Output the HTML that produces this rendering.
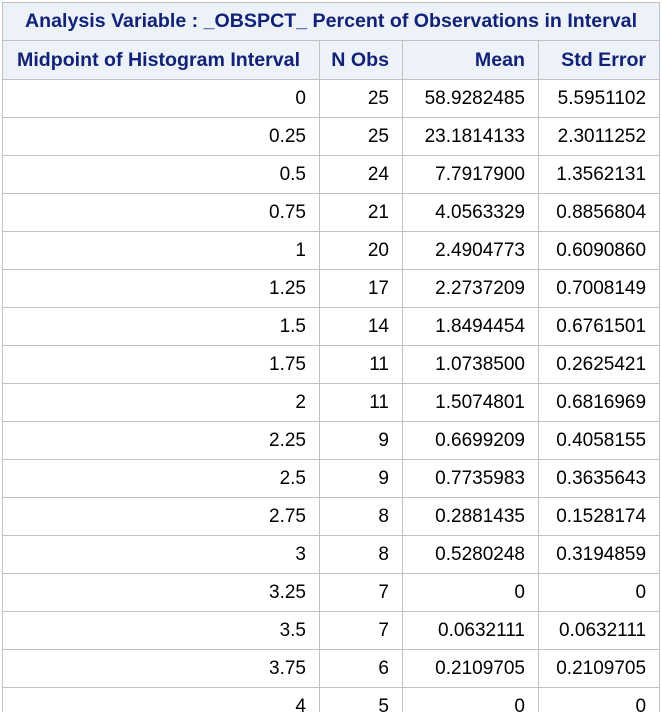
<!DOCTYPE html>
<html><head><meta charset="utf-8"><style>
body{margin:0;background:#fff;width:662px;height:728px;overflow:hidden}
.wrap{position:absolute;left:2px;top:2px;height:710px;overflow:hidden}
table{border-collapse:collapse;font-family:"Liberation Sans",Arial,sans-serif;table-layout:fixed;width:657px}
td,th{border:1px solid #c1c1c1;padding:0 13px 0 2px;height:37px;box-sizing:border-box;font-size:19px;color:#000;text-align:right;white-space:nowrap}
th{background:#edf2f9;color:#112277;font-weight:bold;font-size:19.6px}
tr.h1 th{height:38px;text-align:center;padding:0}
tr.h2 th{height:39px}
tr.h2 th.l{text-align:left;padding-left:14px}
tbody td{height:38px}
td.m{padding-right:13px;padding-left:0}
</style></head><body><div class="wrap"><table>
<colgroup><col style="width:317px"><col style="width:83px"><col style="width:136px"><col style="width:121px"></colgroup>
<thead><tr class="h1"><th colspan="4">Analysis Variable : _OBSPCT_ Percent of Observations in Interval</th></tr>
<tr class="h2"><th class="l">Midpoint of Histogram Interval</th><th>N Obs</th><th>Mean</th><th>Std Error</th></tr></thead>
<tbody>
<tr><td>0</td><td>25</td><td class="m">58.9282485</td><td>5.5951102</td></tr>
<tr><td>0.25</td><td>25</td><td class="m">23.1814133</td><td>2.3011252</td></tr>
<tr><td>0.5</td><td>24</td><td class="m">7.7917900</td><td>1.3562131</td></tr>
<tr><td>0.75</td><td>21</td><td class="m">4.0563329</td><td>0.8856804</td></tr>
<tr><td>1</td><td>20</td><td class="m">2.4904773</td><td>0.6090860</td></tr>
<tr><td>1.25</td><td>17</td><td class="m">2.2737209</td><td>0.7008149</td></tr>
<tr><td>1.5</td><td>14</td><td class="m">1.8494454</td><td>0.6761501</td></tr>
<tr><td>1.75</td><td>11</td><td class="m">1.0738500</td><td>0.2625421</td></tr>
<tr><td>2</td><td>11</td><td class="m">1.5074801</td><td>0.6816969</td></tr>
<tr><td>2.25</td><td>9</td><td class="m">0.6699209</td><td>0.4058155</td></tr>
<tr><td>2.5</td><td>9</td><td class="m">0.7735983</td><td>0.3635643</td></tr>
<tr><td>2.75</td><td>8</td><td class="m">0.2881435</td><td>0.1528174</td></tr>
<tr><td>3</td><td>8</td><td class="m">0.5280248</td><td>0.3194859</td></tr>
<tr><td>3.25</td><td>7</td><td class="m">0</td><td>0</td></tr>
<tr><td>3.5</td><td>7</td><td class="m">0.0632111</td><td>0.0632111</td></tr>
<tr><td>3.75</td><td>6</td><td class="m">0.2109705</td><td>0.2109705</td></tr>
<tr><td>4</td><td>5</td><td class="m">0</td><td>0</td></tr>
</tbody></table></div></body></html>
